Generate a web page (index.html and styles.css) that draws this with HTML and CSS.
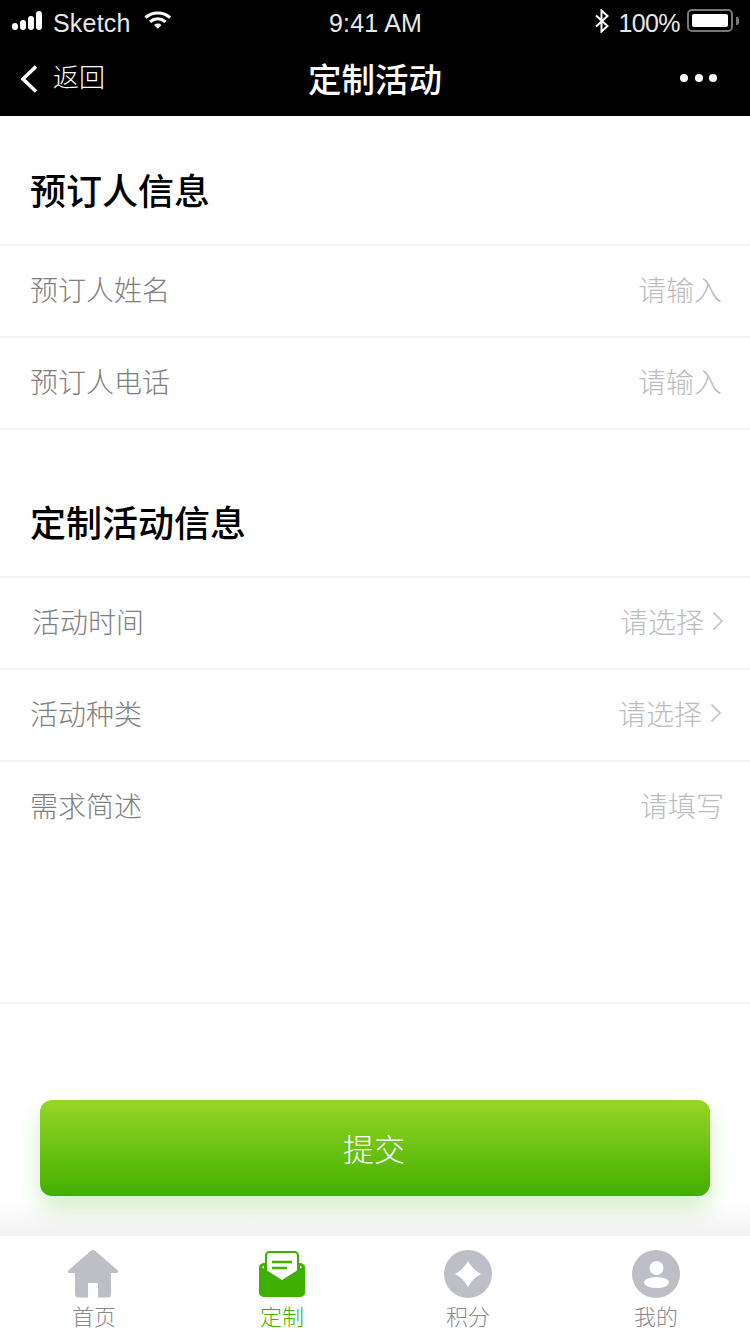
FILE: index.html
```html
<!DOCTYPE html>
<html lang="zh">
<head>
<meta charset="utf-8">
<title>定制活动</title>
<link rel="stylesheet" href="styles.css">
</head>
<body>
<div class="page">
  <header class="top">
    <div class="status">
      <div class="status-left">
        <svg class="signal" width="34" height="20" viewBox="0 0 34 20"><g fill="#fff"><rect x="0" y="12" width="6" height="7" rx="3"/><rect x="8" y="9" width="6" height="10" rx="3"/><rect x="16" y="5" width="6" height="14" rx="3"/><rect x="24" y="0" width="6" height="19" rx="3"/></g></svg>
        <span class="carrier">Sketch</span>
        <svg class="wifi" width="28" height="20" viewBox="0 0 30 20"><g fill="none" stroke="#fff" stroke-width="3.4"><path d="M1.500 7.500C9 .8 20.500.8 28 7.500"/><path d="M6.500 12C11.500 7.800 18 7.800 23 12"/></g><path d="M10.800 15.300C13.400 13.300 16.100 13.300 18.700 15.300L14.750 19.300Z" fill="#fff"/></svg>
      </div>
      <span class="clock">9:41 AM</span>
      <div class="status-right">
        <svg class="bt" width="16" height="24" viewBox="0 0 16 24"><path d="M2 6.500 13.500 17 7.500 22.500V1.500L13.500 7 2 17.500" fill="none" stroke="#fff" stroke-width="2"/></svg>
        <span class="pct">100%</span>
        <div class="battery"><div class="battery-fill"></div></div>
        <div class="battery-tip"></div>
      </div>
    </div>
    <nav class="nav">
      <div class="nav-back">
        <svg class="back-icon" width="20" height="30" viewBox="0 0 20 30"><path d="M17 2.500 4 15l13 12.500" fill="none" stroke="#fff" stroke-width="3.600"/></svg>
        <span>返回</span>
      </div>
      <h1 class="nav-title">定制活动</h1>
      <div class="nav-more"><i></i><i></i><i></i></div>
    </nav>
  </header>

  <main class="form">
    <h2 class="section-title first">预订人信息</h2>
    <div class="row"><span class="label">预订人姓名</span><span class="value">请输入</span></div>
    <div class="row"><span class="label">预订人电话</span><span class="value">请输入</span></div>

    <h2 class="section-title second">定制活动信息</h2>
    <div class="row"><span class="label nudge">活动时间</span><span class="value">请选择<svg class="chev" width="12" height="20" viewBox="0 0 12 20"><path d="M1.500 1.500 10 10 1.500 18.500" fill="none" stroke="#c8c8c8" stroke-width="1.800"/></svg></span></div>
    <div class="row"><span class="label">活动种类</span><span class="value shift">请选择<svg class="chev" width="12" height="20" viewBox="0 0 12 20"><path d="M1.500 1.500 10 10 1.500 18.500" fill="none" stroke="#c8c8c8" stroke-width="1.800"/></svg></span></div>
    <div class="row tall"><span class="label">需求简述</span><span class="value fill-in">请填写</span></div>
  </main>

  <div class="action"><button class="submit">提交</button></div>

  <footer class="tabs">
    <div class="tab">
      <svg class="home-icon" width="52" height="48" viewBox="0 1 52 48"><path d="M26 1a3 3 0 0 1 2 .7l22.500 19.600c1 1 .4 2.700-1 2.700H44v21A3.500 3.500 0 0 1 40.500 48.500H31V34H21v14.500h-9.500A3.500 3.500 0 0 1 8 45V24H2.500c-1.400 0-2-1.700-1-2.700L24 1.700A3 3 0 0 1 26 1Z" fill="#bebec6"/></svg>
      <span>首页</span>
    </div>
    <div class="tab active">
      <svg width="48" height="48" viewBox="0 0 48 48"><rect x="1" y="13" width="46" height="34" rx="5" fill="#40b000"/><path d="M3 18 6 15.500V20ZM45 18 42 15.500V20Z" fill="#fff"/><path d="M8 32V5.500A3.500 3.500 0 0 1 11.500 2h25A3.500 3.500 0 0 1 40 5.500V32Z" fill="#fff" stroke="#40b000" stroke-width="2"/><path d="M14 12h20M14 18h15" stroke="#40b000" stroke-width="2.400" fill="none"/><path d="M1 15.500 9 20.500 24 30 39 20.500 47 15.500V42a5 5 0 0 1-5 5H6a5 5 0 0 1-5-5Z" fill="#40b000"/></svg>
      <span>定制</span>
    </div>
    <div class="tab">
      <svg width="48" height="48" viewBox="0 0 48 48"><circle cx="24" cy="24" r="24" fill="#bebec6"/><path d="M24 11Q28.500 19.500 37 24 28.500 28.500 24 37 19.500 28.500 11 24 19.500 19.500 24 11Z" fill="#fff"/></svg>
      <span>积分</span>
    </div>
    <div class="tab last">
      <svg width="48" height="48" viewBox="0 0 48 48"><circle cx="24" cy="24" r="24" fill="#bebec6"/><circle cx="24.500" cy="18" r="7" fill="#fff"/><ellipse cx="24.500" cy="32.500" rx="12.500" ry="5.500" fill="#fff"/></svg>
      <span>我的</span>
    </div>
  </footer>
</div>
</body>
</html>
```

FILE: styles.css
```css
* { box-sizing: border-box; }
html, body { margin: 0; padding: 0; background: #fff; }
body { font-family: "Noto Sans CJK SC", "Liberation Sans", sans-serif; }
.page { width: 750px; height: 1334px; display: flex; flex-direction: column; overflow: hidden; }

.top { height: 116px; background: #000; color: #fff; flex: none; }
.status { height: 40px; padding: 7px 11px 0 12px; display: grid; grid-template-columns: 1fr auto 1fr; align-items: center; font-family: "Liberation Sans", sans-serif; font-size: 25px; letter-spacing: .2px; color: #e8e8e8; }
.status-left { display: flex; align-items: center; }
.signal { margin-top: -6px; }
.carrier { margin-left: 7px; }
.wifi { margin: -8px 0 0 13px; }
.clock { letter-spacing: .2px; }
.status-right { display: flex; align-items: center; justify-content: flex-end; letter-spacing: -.6px; }
.bt { margin: -6px 8px 0 0; }
.battery { width: 46px; height: 23px; margin-left: 7px; margin-top: -6px; padding: 3px; border: 2px solid #777; border-radius: 5px; }
.battery-fill { height: 100%; background: #fff; border-radius: 2px; }
.battery-tip { width: 3px; height: 8px; margin: -6px 0 0 3px; background: #777; border-radius: 0 2px 2px 0; }

.nav { height: 76px; display: flex; align-items: center; justify-content: space-between; padding: 0 32px 0 19px; position: relative; }
.nav-back { display: flex; align-items: center; gap: 14px; font-size: 26px; font-weight: 300; margin-top: -6px; }
.back-icon { margin-top: 8px; }
.nav-title { position: absolute; left: 0; right: 0; top: 0; margin: 0; text-align: center; font-size: 33.5px; line-height: 76px; font-weight: 500; }
.nav-more { display: flex; gap: 6.500px; margin-top: -1px; margin-right: 1px; }
.nav-more i { width: 8px; height: 8px; border-radius: 50%; background: #fff; }

.form { flex: none; }
.section-title { margin: 0; color: #000; font-size: 36px; font-weight: 500; padding-left: 30px; border-bottom: 2px solid #f1f1f1; }
.section-title.first { height: 130px; line-height: 146px; }
.section-title.second { height: 148px; line-height: 182px; }
.row { height: 92px; padding: 0 28px 4px 30px; border-bottom: 2px solid #f1f1f1; display: flex; align-items: center; justify-content: space-between; font-size: 28px; font-weight: 300; }
.row.tall { height: 242px; padding-top: 6px; padding-bottom: 160px; }
.label { color: #808080; }
.label.nudge { margin-left: 2px; }
.value { color: #bdbdbd; display: flex; align-items: center; }
.value.shift { margin-right: 2px; }
.value.fill-in { margin-right: -2px; }
.chev { margin-left: 8px; margin-right: -2px; }

.action { flex: 1; padding: 96px 40px 0; background: linear-gradient(#fff 0, #fff 196px, #f2f2f2 232px); }
.submit { display: block; width: 670px; height: 96px; border: 0; border-radius: 12px; padding: 0 2px 2px 0; color: #fff; font: 300 31px "Noto Sans CJK SC", sans-serif; background: linear-gradient(#97d626, #41b000); box-shadow: 0 12px 24px rgba(65, 176, 0, .22); }

.tabs { flex: none; height: 98px; background: #fff; display: grid; grid-template-columns: 188px 188px 184px 190px; }
.tab { display: flex; flex-direction: column; align-items: center; padding-top: 14px; font-size: 22px; line-height: 26px; font-weight: 300; color: #8a8a8a; }
.tab.last { padding-left: 2px; }
.tab span { margin-top: 4px; }
.tab svg { display: block; }
.home-icon { margin-left: -2px; }
.tab.active { color: #40b000; }
```
